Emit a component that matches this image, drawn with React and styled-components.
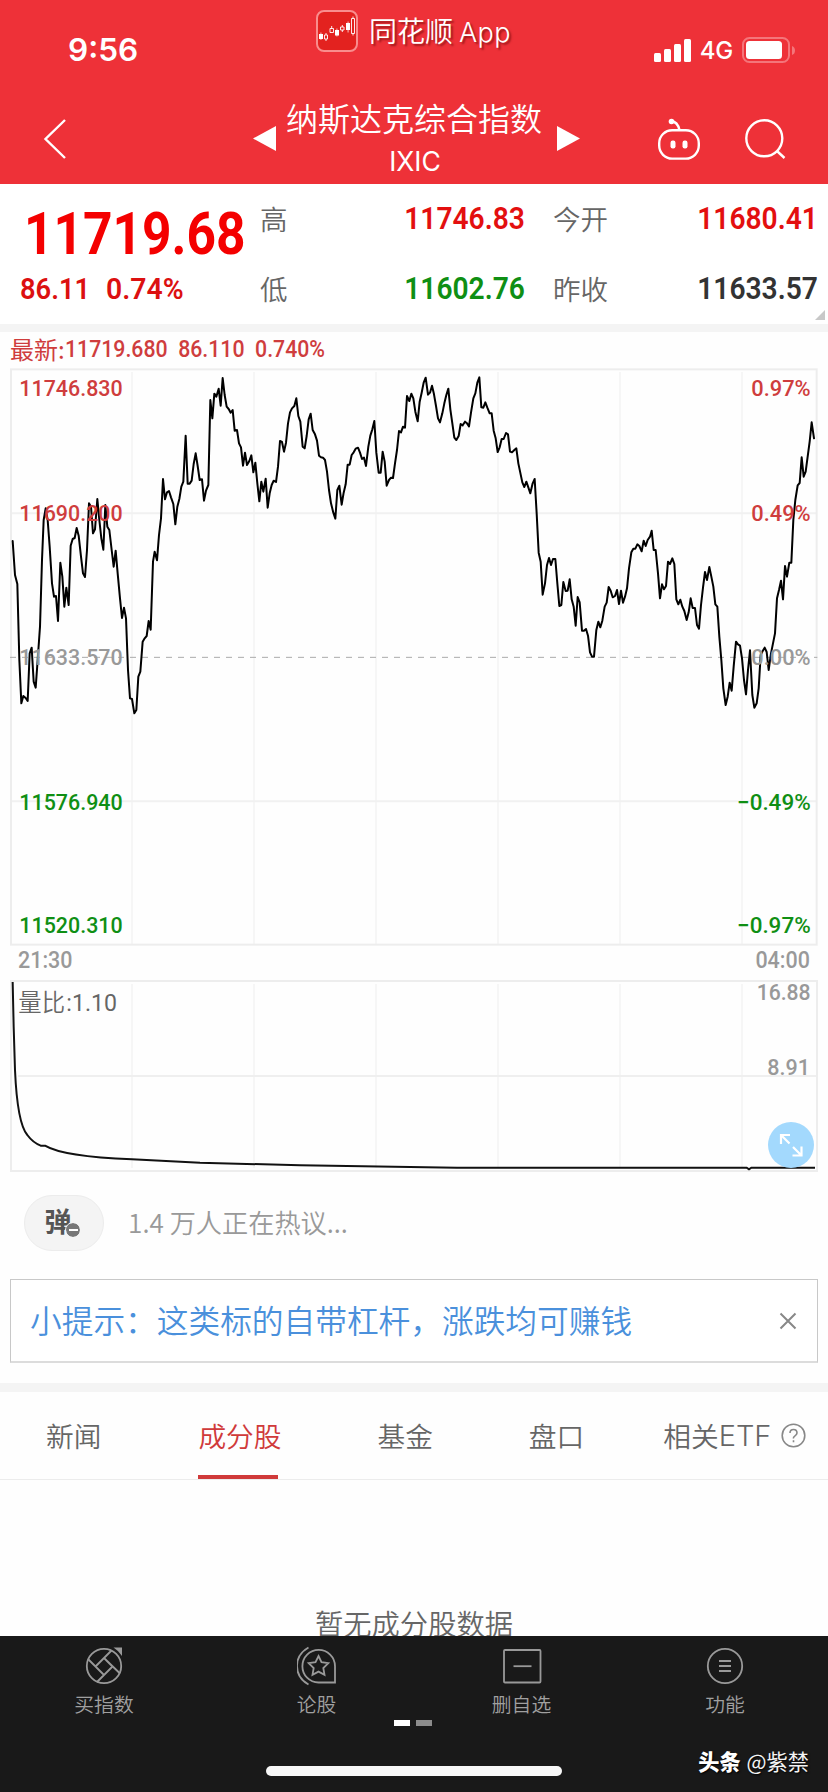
import React, { useState } from "react";
import styled, { createGlobalStyle } from "styled-components";

const GlobalStyle = createGlobalStyle`
  * {
    box-sizing: border-box;
  }

  body {
    margin: 0;
    background: #fff;
    font-family: "Noto Sans CJK SC", "Noto Sans", sans-serif;
  }
`;

const Page = styled.div`
  display: flex;
  flex-direction: column;
  position: relative;
  width: 828px;
  height: 1792px;
  overflow: hidden;
  background: #fefefe;
`;

/* ---------- header ---------- */

const Header = styled.header`
  height: 184px;
  background: #ee3138;
  color: #fff;
`;

const StatusBar = styled.div`
  display: flex;
  justify-content: space-between;
  align-items: center;
  height: 100px;
  padding: 0 32px 0 68px;
`;

const Clock = styled.span`
  font: 600 31.5px/40px Inter, sans-serif;
`;

const StatusIcons = styled.div`
  display: flex;
  align-items: center;
`;

const Network = styled.span`
  margin: 2px 9px 0 8px;
  font: 500 24px/30px Inter, sans-serif;
  letter-spacing: -0.2px;
`;

const BrandMark = styled.div`
  position: absolute;
  top: 10px;
  left: 316px;
  display: flex;
  align-items: center;
  gap: 11px;
  height: 42px;
  font-size: 28px;
  line-height: 42px;
  font-weight: 350;
  white-space: nowrap;
  text-shadow: 2px 2px 2px rgba(90, 0, 0, 0.55);
`;

const BrandLatin = styled.span`
  margin-left: 6px;
  font-family: Inter, sans-serif;
  font-size: 27px;
  letter-spacing: 0.4px;
`;

const NavBar = styled.div`
  display: flex;
  align-items: center;
  height: 78px;
  padding: 0 42px 0 43px;
`;

const TitleGroup = styled.div`
  display: flex;
  align-items: center;
  gap: 9px;
  margin: -2px 0 0 187px;
`;

const TitleText = styled.div`
  display: flex;
  flex-direction: column;
  align-items: center;
  width: 263px;
  margin-top: 1px;
  padding-right: 5px;
`;

const IndexName = styled.span`
  font-size: 32px;
  line-height: 44px;
  font-weight: 350;
  white-space: nowrap;
`;

const IndexCode = styled.span`
  padding-left: 2px;
  font: 400 26.5px/44px Inter, sans-serif;
`;

const Actions = styled.div`
  display: flex;
  align-items: center;
  gap: 45px;
  margin-left: auto;
`;

/* ---------- quote ---------- */

const Quote = styled.section`
  position: relative;
  display: flex;
  height: 140px;
  background: #fff;
`;

/* narrow figures, close to the DIN numerals of the trading apps */
const Digits = styled.span`
  font-family: Roboto, sans-serif;
  font-size: ${(props) => props.$size || 31.5}px;
  font-weight: ${(props) => props.$weight || 600};
  line-height: 1;
  color: ${(props) => props.$color || "#333"};
  white-space: pre;
  transform: scaleX(${(props) => props.$narrow || 0.895});
  transform-origin: ${(props) => (props.$end ? "right" : "left")} center;
`;

const LastPrice = styled.div`
  display: flex;
  flex-direction: column;
  width: 260px;
  padding: 20px 0 0 24px;
`;

const Change = styled.div`
  display: flex;
  gap: 9px;
  margin: 11px 0 0 -4px;
`;

const Stats = styled.div`
  display: grid;
  grid-template-columns: 264px 292px;
  grid-template-rows: 70px 70px;
  column-gap: 29px;
  width: 556px;
`;

const Stat = styled.div`
  display: flex;
  justify-content: space-between;
  align-items: center;
  width: ${(props) => props.$width}px;
  padding-bottom: 1px;
`;

const StatLabel = styled.span`
  margin-bottom: 1px;
  font-size: 27.5px;
  line-height: 40px;
  font-weight: 350;
  color: #666;
`;

const Corner = styled.i`
  position: absolute;
  right: 3px;
  bottom: 4px;
  border-left: 10px solid transparent;
  border-bottom: 10px solid #c8c8c8;
`;

const Divider = styled.div`
  height: ${(props) => props.$height}px;
  background: #f4f4f4;
`;

/* ---------- charts ---------- */

const Latest = styled.div`
  display: flex;
  align-items: center;
  height: 34px;
  padding-left: 10px;
  color: #cf3d3d;
`;

const LatestLabel = styled.span`
  font-size: 24px;
  line-height: 34px;
  font-weight: 400;
`;

const ChartSvg = styled.svg`
  display: block;
  width: 828px;
  height: ${(props) => props.$height}px;
`;

const AxisText = styled.text`
  font-family: Roboto, "Noto Sans CJK SC", sans-serif;
  font-size: ${(props) => props.$size || 67}px;
  font-weight: ${(props) => props.$weight || 500};
`;

const TimeAxis = styled.div`
  display: flex;
  justify-content: space-between;
  align-items: center;
  height: 34px;
  padding: 0 18px 6px;
`;

const VolumePanel = styled.div`
  position: relative;
`;

const ExpandButton = styled.button`
  position: absolute;
  right: 14px;
  bottom: 4px;
  width: 46px;
  height: 46px;
  padding: 0;
  border: 0;
  border-radius: 50%;
  background: #a3d9fd;
`;

/* ---------- comments and tip ---------- */

const Comments = styled.div`
  display: flex;
  align-items: center;
  gap: 24px;
  height: 107px;
  padding: 0 24px 6px;
`;

const DanmuButton = styled.button`
  position: relative;
  width: 80px;
  height: 56px;
  padding: 0 12px 4px 0;
  border: 1px solid #ececec;
  border-radius: 28px;
  background: #f4f4f4;
  color: #555;
  font: 700 27px/40px "Noto Sans CJK SC", sans-serif;
`;

const MinusBadge = styled.i`
  position: absolute;
  left: 41px;
  top: 27px;
  width: 14px;
  height: 14px;
  border-radius: 50%;
  background: linear-gradient(#fff, #fff) center / 9px 2px no-repeat #777;
  outline: 1px solid #f4f4f4;
`;

const CommentHint = styled.span`
  margin-bottom: 2px;
  font-size: 26.2px;
  line-height: 40px;
  font-weight: 350;
  color: #999;
`;

const Tip = styled.div`
  display: flex;
  justify-content: space-between;
  align-items: center;
  height: 84px;
  margin: 0 10px 20px;
  padding: 0 20px 0 19px;
  border: 1px solid #c8c8c8;
  border-bottom: 2px solid #dcdcdc;
  background: #fff;
`;

const TipText = styled.span`
  margin-bottom: 4px;
  font-size: 31.7px;
  line-height: 44px;
  font-weight: 350;
  color: #4a90dc;
  white-space: nowrap;
`;

/* ---------- tabs ---------- */

const Tabs = styled.nav`
  display: flex;
  height: 88px;
  padding-left: 46px;
  border-bottom: 1px solid #ececec;
`;

const Tab = styled.button`
  display: flex;
  align-items: center;
  margin: 0 ${(props) => props.$gap}px 0 0;
  padding: 2px 0 0;
  border: 0;
  border-bottom: 4px solid transparent;
  border-image: ${(props) =>
    props.$active
      ? "linear-gradient(90deg, #d03a3a 0 79px, transparent 79px) 1"
      : "none"};
  background: none;
  font: 350 27.7px/40px "Noto Sans CJK SC", sans-serif;
  color: ${(props) => (props.$active ? "#d03a3a" : "#666")};
  white-space: nowrap;

  & > svg {
    margin: 2px 0 0 10px;
  }
`;

const TabLatin = styled.span`
  margin-top: 2px;
  font-family: Inter, sans-serif;
  font-size: 29px;
`;

const Empty = styled.div`
  display: flex;
  justify-content: center;
  align-items: flex-end;
  height: 156px;
  overflow: hidden;
`;

const EmptyText = styled.span`
  margin-bottom: -8px;
  font-size: 28.3px;
  line-height: 42px;
  font-weight: 350;
  color: #666;
`;

/* ---------- footer ---------- */

const Footer = styled.footer`
  position: relative;
  display: flex;
  flex-direction: column;
  align-items: center;
  height: 156px;
  background: #191919;
`;

const FooterItems = styled.div`
  display: grid;
  grid-template-columns: 208px 217px 193px 214px;
  width: 828px;
  height: 84px;
`;

const FooterItem = styled.div`
  display: flex;
  flex-direction: column;
  align-items: center;
  padding-top: 10px;
  font-size: 19.8px;
  line-height: 28px;
  font-weight: 350;
  color: #a0a0a0;

  & > svg {
    margin-bottom: 4px;
  }
`;

const Dots = styled.div`
  display: flex;
  gap: 6px;
  margin-left: -2px;
`;

const Dot = styled.i`
  width: 16px;
  height: 6px;
  background: ${(props) => (props.$active ? "#fff" : "#8c8c8c")};
`;

const HomeBar = styled.div`
  width: 296px;
  height: 10px;
  margin-top: 40px;
  border-radius: 5px;
  background: #f7f7f7;
`;

const Author = styled.div`
  position: absolute;
  right: 19px;
  bottom: 15px;
  display: flex;
  align-items: center;
  gap: 6px;
  font-size: 21.2px;
  line-height: 32px;
  font-weight: 400;
  color: #f4f4f4;
  text-shadow: 1px 1px 2px #000;

  & > b {
    font-weight: 900;
    color: #fff;
  }
`;

/* Chart units are thirds of a pixel, y counts from the top of the chart block */
const PRICE_LINE = `38,543 45,645 52,672 58,900 64,1030 70,1008 77,1014 83,1023 89,880 95,863
101,965 107,983 113,900 120,800 126,600 131,480 137,445 143,480 149,560 156,670 162,710 168,708
174,783 181,608 187,650 193,740 199,683 206,735 212,557 218,537 224,534 230,504 236,527 243,590
249,640 255,651 261,570 267,430 273,440 279,520 285,508 292,417 298,480 304,535 310,569 316,435
322,500 328,510 335,570 341,620 347,572 353,640 360,715 366,774 372,743 378,775 384,930 390,1015
396,1017 403,1060 409,1050 415,950 421,935 428,845 434,835 440,828 446,783 452,809 459,605
464,575 471,601 477,525 483,475 489,357 495,418 501,397 507,393 513,412 520,432 526,493 532,440
538,417 544,380 550,365 557,227 563,371 569,371 575,362 581,312 587,280 593,318 599,360 606,358
612,422 618,392 625,375 631,120 637,175 643,101 649,110 656,86 662,137 668,54 674,105 680,140
686,147 692,158 698,150 704,212 711,210 717,250 723,262 729,317 735,278 741,315 748,303 754,286
760,337 766,308 772,370 778,424 784,365 790,395 797,356 803,443 809,400 815,375 821,362 828,366
834,320 840,243 846,246 852,275 858,248 864,190 870,157 876,145 883,138 889,115 895,168 901,185
908,260 914,265 920,228 926,178 932,161 938,210 945,223 951,242 957,287 963,292 969,293 975,300
981,335 987,390 993,430 1000,458 1006,476 1012,390 1018,377 1025,434 1031,398 1037,373 1043,314
1049,314 1055,285 1061,277 1067,266 1074,263 1080,278 1086,297 1092,293 1098,318 1105,260
1111,227 1117,208 1123,183 1129,278 1136,338 1142,338 1148,275 1154,305 1160,377 1167,360
1173,353 1179,354 1185,310 1191,270 1197,213 1203,217 1209,200 1215,203 1221,108 1228,123
1234,101 1240,115 1246,155 1253,184 1259,125 1265,98 1271,68 1277,53 1284,104 1290,98 1296,77
1302,103 1308,138 1314,175 1320,187 1327,160 1333,130 1339,105 1345,86 1351,148 1357,190
1363,233 1369,240 1376,228 1382,192 1388,196 1395,185 1401,190 1407,199 1413,158 1420,115
1426,100 1432,68 1438,52 1444,142 1450,143 1456,127 1462,143 1469,160 1475,160 1481,212 1487,235
1493,276 1499,262 1505,237 1511,237 1518,219 1524,223 1530,275 1536,277 1543,270 1549,265
1555,310 1567,367 1573,381 1579,365 1585,382 1591,400 1598,370 1604,357 1610,460 1616,578
1622,605 1628,704 1635,670 1641,615 1647,594 1653,615 1659,597 1666,597 1672,670 1678,738
1684,735 1690,666 1697,693 1703,692 1709,658 1715,718 1721,740 1727,797 1733,711 1739,727
1746,812 1752,812 1758,807 1764,827 1770,877 1776,890 1782,890 1789,810 1795,785 1801,802
1807,782 1814,740 1820,728 1826,681 1832,692 1838,712 1845,708 1851,690 1857,732 1863,692
1869,728 1875,710 1881,685 1887,625 1894,577 1900,566 1906,566 1912,553 1918,558 1925,574
1931,542 1937,558 1943,540 1950,530 1955,512 1961,570 1967,570 1974,640 1980,715 1986,673
1992,688 1998,678 2004,605 2010,612 2017,595 2023,612 2029,718 2035,733 2041,719 2047,740
2053,753 2060,780 2066,757 2072,715 2078,744 2085,744 2091,795 2097,806 2103,735 2109,683
2115,636 2121,660 2128,621 2134,650 2140,680 2146,733 2152,740 2158,830 2164,900 2170,985
2177,1035 2183,1010 2189,968 2195,992 2201,920 2208,845 2214,853 2220,857 2226,895 2232,960
2238,1003 2244,930 2250,871 2257,1005 2263,1043 2270,1030 2276,985 2282,885 2288,873 2294,863
2300,876 2306,930 2313,880 2319,850 2325,820 2331,715 2337,690 2343,662 2349,718 2355,618
2361,650 2368,608 2374,608 2380,480 2386,420 2393,376 2399,369 2405,292 2411,350 2417,335
2423,290 2429,245 2435,187 2442,235`;

const GRID_X = [396, 762, 1128, 1494, 1860, 2226];

const PRICE_AXIS = [
  { y: 107, price: "11746.830", percent: "0.97%", width: 178, color: "#cf3d3d" },
  { y: 482, price: "11690.200", percent: "0.49%", width: 178, color: "#cf3d3d" },
  { y: 914, price: "11633.570", percent: "0.00%", width: 178, color: "#999" },
  { y: 1349, price: "11576.940", percent: "−0.49%", width: 221, color: "#0f8f14" },
  { y: 1720, price: "11520.310", percent: "−0.97%", width: 221, color: "#0f8f14" },
];

function PriceChart() {
  return (
    <ChartSvg $height={580} viewBox="0 18 2484 1740">
      <g stroke="#f6f6f6" strokeWidth="6">
        {GRID_X.map((x) => (
          <line key={x} x1={x} x2={x} y1="36" y2="1752" />
        ))}
        <line x1="34" x2="2450" y1="460" y2="460" stroke="#f1f1f1" />
        <line x1="34" x2="2450" y1="1324" y2="1324" stroke="#f1f1f1" />
      </g>
      <rect x="33" y="28" width="2417" height="1726" fill="none" stroke="#ededed" strokeWidth="6" />
      <line
        x1="30"
        x2="2452"
        y1="892"
        y2="892"
        stroke="#aaa"
        strokeWidth="3"
        strokeDasharray="18 18"
      />
      <polyline
        points={PRICE_LINE}
        fill="none"
        stroke="#000"
        strokeWidth="6"
        strokeLinejoin="round"
        strokeLinecap="round"
      />
      {PRICE_AXIS.map((row) => (
        <g key={row.price} fill={row.color}>
          <AxisText x="58" y={row.y} textLength="310" lengthAdjust="spacingAndGlyphs">
            {row.price}
          </AxisText>
          <AxisText
            x={2432 - row.width}
            y={row.y}
            textLength={row.width}
            lengthAdjust="spacingAndGlyphs"
          >
            {row.percent}
          </AxisText>
        </g>
      ))}
    </ChartSvg>
  );
}

function VolumeChart() {
  return (
    <ChartSvg $height={192} viewBox="0 240 2484 576">
      <g stroke="#f6f6f6" strokeWidth="6">
        {GRID_X.map((x) => (
          <line key={x} x1={x} x2={x} y1="252" y2="804" />
        ))}
        <line x1="54" x2="2448" y1="528" y2="528" stroke="#efefef" />
      </g>
      <rect x="33" y="243" width="2418" height="570" fill="none" stroke="#ededed" strokeWidth="6" />
      <g fill="#999">
        <AxisText x="2270" y="299" textLength="162" lengthAdjust="spacingAndGlyphs">
          16.88
        </AxisText>
        <AxisText x="2302" y="526" textLength="128" lengthAdjust="spacingAndGlyphs">
          8.91
        </AxisText>
      </g>
      <AxisText x="55" y="332" $size={70} $weight={350} fill="#666">
        量比
      </AxisText>
      <AxisText
        x="199"
        y="332"
        $size={72}
        $weight={400}
        fill="#666"
        textLength="152"
        lengthAdjust="spacingAndGlyphs"
      >
        :1.10
      </AxisText>
      <path
        d="M38 246 41 380 45 510Q52 670 82 705Q98 727 122 737L135 737Q190 770 396 778L600 788 900 796 1371 803H2240L2247 808L2254 803H2445"
        fill="none"
        stroke="#111"
        strokeWidth="6"
      />
    </ChartSvg>
  );
}

function BrandIcon() {
  return (
    <svg width="42" height="42" viewBox="0 0 42 42">
      <rect x="1" y="1" width="40" height="40" rx="7" fill="#e3221f" stroke="#f98d8d" strokeWidth="2" />
      <g fill="#fff">
        <path d="M3 24h4v5H3zM19 20h4v5.500h-4zM30 13h4v7h-4z" />
        <path d="M31.700 11.500h.7v11h-.7zM20.600 18.500h.7v8h-.7zM4.600 22.500h.7v7.500h-.7z" />
      </g>
      <path
        d="M8.500 25h3v4h-3zM10 23v2M10 29v2M14 18.500h3.500v4H14zM15.700 16v2.500M24.500 17h3.500v3h-3.500zM26.300 15v2M26.300 20v2M35.500 8.500h3v15h-3zM37 6.500v2M37 23.500v2"
        fill="none"
        stroke="#fff"
        strokeWidth="0.9"
      />
    </svg>
  );
}

function SignalIcon() {
  return (
    <svg width="38" height="24" viewBox="0 0 38 24" fill="#fff">
      <rect x="0" y="15" width="7" height="9" rx="1.500" />
      <rect x="10" y="11" width="7" height="13" rx="1.500" />
      <rect x="20" y="6" width="7" height="18" rx="1.500" />
      <rect x="30" y="1" width="7" height="23" rx="1.500" />
    </svg>
  );
}

function BatteryIcon() {
  return (
    <svg width="54" height="26" viewBox="0 0 54 26">
      <rect x="1" y="1" width="46" height="24" rx="6.500" fill="none" stroke="#f4757a" strokeWidth="2" />
      <rect x="4" y="4" width="36" height="18" rx="3.500" fill="#fff" />
      <path d="M50 9q3 1 3 4.500T50 18z" fill="#f4757a" />
    </svg>
  );
}

function RobotIcon() {
  return (
    <svg width="42" height="42" viewBox="0 0 42 42" fill="none" stroke="#fff" strokeWidth="2.400">
      <rect x="1.200" y="12.200" width="39.600" height="28.400" rx="13" />
      <path d="M13.500 3.500Q19.500 3.500 21.500 12" />
      <circle cx="13.500" cy="3.500" r="2.800" fill="#fff" stroke="none" />
      <rect x="12.500" y="22.500" width="5" height="8" rx="2.200" fill="#fff" stroke="none" />
      <rect x="24.500" y="22.500" width="5" height="8" rx="2.200" fill="#fff" stroke="none" />
    </svg>
  );
}

function SearchIcon() {
  return (
    <svg width="41" height="41" viewBox="0 0 41 41" fill="none" stroke="#fff" strokeWidth="2.400">
      <circle cx="19.300" cy="19.300" r="18" />
      <path d="M32 32 39.500 39" />
    </svg>
  );
}

function TopHeader() {
  return (
    <Header>
      <StatusBar>
        <Clock>9:56</Clock>
        <StatusIcons>
          <SignalIcon />
          <Network>4G</Network>
          <BatteryIcon />
        </StatusIcons>
      </StatusBar>
      <BrandMark>
        <BrandIcon />
        <span>
          同花顺<BrandLatin>App</BrandLatin>
        </span>
      </BrandMark>
      <NavBar>
        <svg width="23" height="40" viewBox="0 0 23 40" fill="none" stroke="#fff" strokeWidth="2.400">
          <path d="M22 1 2.500 20 22 39" />
        </svg>
        <TitleGroup>
          <svg width="23" height="25" viewBox="0 0 23 25" fill="#fff">
            <path d="M0 12.500 23 0V25z" />
          </svg>
          <TitleText>
            <IndexName>纳斯达克综合指数</IndexName>
            <IndexCode>IXIC</IndexCode>
          </TitleText>
          <svg width="23" height="25" viewBox="0 0 23 25" fill="#fff">
            <path d="M23 12.500 0 0V25z" />
          </svg>
        </TitleGroup>
        <Actions>
          <RobotIcon />
          <SearchIcon />
        </Actions>
      </NavBar>
    </Header>
  );
}

const STATS = [
  { label: "高", value: "11746.83", color: "#e30f0f", width: 265 },
  { label: "今开", value: "11680.41", color: "#e30f0f", width: 265 },
  { label: "低", value: "11602.76", color: "#0f8f14", width: 265 },
  { label: "昨收", value: "11633.57", color: "#333", width: 265 },
];

function QuotePanel() {
  return (
    <Quote>
      <LastPrice>
        <Digits $size={59} $weight={700} $narrow={0.872} $color="#f40000">
          11719.68
        </Digits>
        <Change>
          <Digits $size={30} $narrow={0.91} $color="#dc1010">
            86.11
          </Digits>
          <Digits $size={30} $narrow={0.945} $color="#dc1010">
            0.74%
          </Digits>
        </Change>
      </LastPrice>
      <Stats>
        {STATS.map((stat) => (
          <Stat key={stat.label} $width={stat.width}>
            <StatLabel>{stat.label}</StatLabel>
            <Digits $end $color={stat.color}>
              {stat.value}
            </Digits>
          </Stat>
        ))}
      </Stats>
      <Corner />
    </Quote>
  );
}

const FOOTER_ITEMS = [
  {
    label: "买指数",
    icon: (
      <>
        <circle cx="20" cy="20" r="17.200" />
        <path d="M20 12 28.500 20.500M27.500 4.500 11.500 20.500M4.500 13.500 20 29M28.500 20.500 13 36M20 12 36 27.500" />
        <path d="M29.500 1.500H38V10Q35 5 29.500 1.500z" fill="#999" stroke="none" />
      </>
    ),
  },
  {
    label: "论股",
    icon: (
      <>
        <path d="M38 36.500H21.500A16.300 16.300 0 1 1 38 20z" />
        <path d="M11.500 1.500Q0 8 0 20Q0 32 11.500 38.500" />
        <path d="m21.500 10 3 6.200 6.800 1-5 4.800 1.200 6.800-6-3.200-6 3.200 1.200-6.800-5-4.800 6.800-1z" />
      </>
    ),
  },
  {
    label: "删自选",
    icon: (
      <>
        <rect x="2" y="4" width="36.500" height="32.500" rx="1" />
        <path d="M11.500 20.200H29.500" />
      </>
    ),
  },
  {
    label: "功能",
    icon: (
      <>
        <circle cx="20" cy="20" r="17.200" />
        <path d="M14 15H26M14 20H26M14 25H26" />
      </>
    ),
  },
];

const TABS = [
  { label: "新闻", gap: 97 },
  { label: "成分股", gap: 96 },
  { label: "基金", gap: 96 },
  { label: "盘口", gap: 79 },
  { label: "相关", latin: "ETF", gap: 0, help: true },
];

function App() {
  const [activeTab, setActiveTab] = useState("成分股");
  const [showTip, setShowTip] = useState(true);

  return (
    <Page>
      <GlobalStyle />
      <TopHeader />
      <QuotePanel />
      <Divider $height={8} />
      <Latest>
        <LatestLabel>最新:</LatestLabel>
        <Digits $size={24.5} $weight={500} $narrow={0.868} $color="#cf3d3d">
          {"11719.680  86.110  0.740%"}
        </Digits>
      </Latest>
      <PriceChart />
      <TimeAxis>
        <Digits $size={24} $weight={500} $color="#999">
          21:30
        </Digits>
        <Digits $end $size={24} $weight={500} $color="#999">
          04:00
        </Digits>
      </TimeAxis>
      <VolumePanel>
        <VolumeChart />
        <ExpandButton>
          <svg width="46" height="46" viewBox="0 0 46 46" fill="none" stroke="#fff" strokeWidth="2.200">
            <path d="M13 22V13H22M13 13 21.500 21.500M33.500 24.500V33.500H24.500M33.500 33.500 25 25" />
          </svg>
        </ExpandButton>
      </VolumePanel>
      <Comments>
        <DanmuButton>
          弹
          <MinusBadge />
        </DanmuButton>
        <CommentHint>1.4 万人正在热议...</CommentHint>
      </Comments>
      {showTip && (
        <Tip>
          <TipText>小提示：这类标的自带杠杆，涨跌均可赚钱</TipText>
          <svg
            width="18"
            height="18"
            viewBox="0 0 18 18"
            stroke="#888"
            strokeWidth="2"
            onClick={() => setShowTip(false)}
          >
            <path d="M1.500 1.500 16.500 16.500M16.500 1.500 1.500 16.500" />
          </svg>
        </Tip>
      )}
      <Divider $height={9} />
      <Tabs>
        {TABS.map((tab) => (
          <Tab
            key={tab.label}
            $gap={tab.gap}
            $active={tab.label === activeTab}
            onClick={() => setActiveTab(tab.label)}
          >
            {tab.label}
            {tab.latin && <TabLatin>{tab.latin}</TabLatin>}
            {tab.help && (
              <svg width="25" height="25" viewBox="0 0 25 25" fill="none" stroke="#888" strokeWidth="1.600">
                <circle cx="12.500" cy="12.500" r="11.300" />
                <path d="M9 10Q9 6.500 12.500 6.500T16 10Q16 11.500 14 12.800T12.500 15.500M12.500 17.300V19.200" />
              </svg>
            )}
          </Tab>
        ))}
      </Tabs>
      <Empty>
        <EmptyText>暂无成分股数据</EmptyText>
      </Empty>
      <Footer>
        <FooterItems>
          {FOOTER_ITEMS.map((item) => (
            <FooterItem key={item.label}>
              <svg width="40" height="40" viewBox="0 0 40 40" fill="none" stroke="#999" strokeWidth="1.800">
                {item.icon}
              </svg>
              {item.label}
            </FooterItem>
          ))}
        </FooterItems>
        <Dots>
          <Dot $active />
          <Dot />
        </Dots>
        <HomeBar />
        <Author>
          <b>头条</b>
          <span>@紫禁</span>
        </Author>
      </Footer>
    </Page>
  );
}

export default App;
